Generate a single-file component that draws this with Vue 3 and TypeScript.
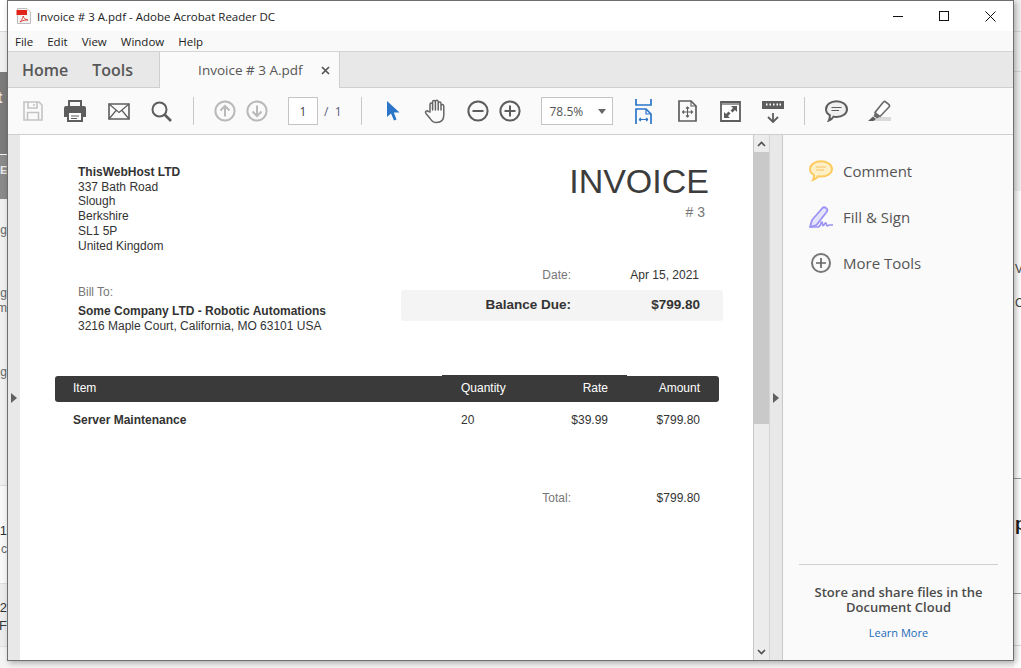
<template>
  <div class="desktop">
    <!-- page behind the window, only the edges show -->
    <div class="bg-left">
      <div class="bl-top"></div>
      <div class="bl-dark"><span class="bl-t">t</span><span class="bl-e">E</span></div>
      <div class="bl-mid">
        <span class="frag" style="top: 24px">ng</span>
        <span class="frag" style="top: 87px">ng</span>
        <span class="frag" style="top: 102px">m</span>
        <span class="frag" style="top: 166px">ng</span>
      </div>
      <div class="bl-low">
        <span class="frag dark" style="top: 38px">1</span>
        <span class="frag" style="top: 56px">c</span>
      </div>
      <div class="bl-bottom">
        <span class="frag dark" style="top: 17px">2</span>
        <span class="frag dark" style="top: 35px">)F</span>
      </div>
    </div>
    <div class="bg-right">
      <span class="frag-r" style="top: 262px">V</span>
      <span class="frag-r" style="top: 296px">C</span>
      <span class="frag-r big" style="top: 517px">p</span>
      <i class="bg-line light" style="top: 31px"></i>
      <i class="bg-line light" style="top: 71px"></i>
      <i class="bg-line" style="top: 478px"></i>
      <i class="bg-line" style="top: 593px"></i>
      <i class="bg-line light" style="top: 645px"></i>
    </div>

    <div class="window">
      <div class="titlebar">
        <svg class="pdf-icon" width="16" height="16" viewBox="0 0 16 16">
          <path d="M1.5 .5H11L14.5 4V15.5H1.5Z" fill="#f4f4f4" stroke="#bdbdbd" />
          <path d="M.5 2H11V7H.5Z" fill="#e2231a" />
          <path d="M4 14C6 12 7 9.5 7.2 8C7.6 10 9 11.5 12 12C9.5 11.8 6.5 12.4 4 14Z" fill="none" stroke="#d8372f" stroke-width=".9" />
        </svg>
        <span class="title-text">Invoice # 3 A.pdf - Adobe Acrobat Reader DC</span>
        <div class="win-btns">
          <span class="win-btn"><i class="min"></i></span>
          <span class="win-btn"><i class="max"></i></span>
          <span class="win-btn">
            <svg width="11" height="11" viewBox="0 0 11 11"><path d="M.5 .5L10.5 10.5M10.5 .5L.5 10.5" stroke="#111" fill="none" /></svg>
          </span>
        </div>
      </div>

      <div class="menubar">
        <span v-for="m in menus" :key="m">{{ m }}</span>
      </div>

      <div class="tabbar">
        <span class="nav-tab">Home</span>
        <span class="nav-tab">Tools</span>
        <div class="doc-tab">
          <span>Invoice # 3 A.pdf</span>
          <svg width="9" height="9" viewBox="0 0 9 9"><path d="M1 1L8 8M8 1L1 8" stroke="#555" stroke-width="1.7" /></svg>
        </div>
      </div>

      <div class="toolbar">
        <svg class="tool t-save" width="22" height="22" viewBox="0 0 22 22" fill="none" stroke="#c4c4c4" stroke-width="1.6">
          <path d="M2 2H17L20 5V20H2Z" />
          <path d="M6 2V8H15V2M12 4V6" />
          <path d="M5.5 20V12.5H16.5V20" />
        </svg>
        <svg class="tool t-print" width="24" height="22" viewBox="0 0 24 22">
          <path d="M6 1H18V7H6Z" fill="none" stroke="#5d5d5d" stroke-width="2" />
          <path d="M3 6H21Q23 6 23 8V17H19V13H5V17H1V8Q1 6 3 6Z" fill="#5d5d5d" />
          <path d="M5 12H19V21H5Z" fill="#fff" stroke="#5d5d5d" stroke-width="2" />
          <path d="M8 16H16M8 18.5H14" stroke="#5d5d5d" />
        </svg>
        <svg class="tool t-mail" width="22" height="17" viewBox="0 0 22 17" fill="none" stroke="#5d5d5d" stroke-width="1.6">
          <path d="M1 1H21V16H1Z" />
          <path d="M1 1L11 9.5L21 1M1 16L8 7.5M21 16L14 7.5" stroke-width="1.2" />
        </svg>
        <svg class="tool t-search" width="21" height="21" viewBox="0 0 21 21" fill="none" stroke="#5d5d5d">
          <circle cx="8.5" cy="8.5" r="7" stroke-width="2" />
          <path d="M13.5 13.5L20 20" stroke-width="2.6" />
        </svg>
        <i class="sep s1"></i>
        <svg class="tool t-up" width="22" height="22" viewBox="0 0 22 22" fill="none" stroke="#b9b9b9" stroke-width="2">
          <circle cx="11" cy="11" r="9.6" />
          <path d="M11 16.5V6M6.5 10.5L11 6L15.5 10.5" />
        </svg>
        <svg class="tool t-down" width="22" height="22" viewBox="0 0 22 22" fill="none" stroke="#b9b9b9" stroke-width="2">
          <circle cx="11" cy="11" r="9.6" />
          <path d="M11 5.5V16M6.5 11.5L11 16L15.5 11.5" />
        </svg>
        <span class="page-box">1</span>
        <span class="page-total">/&nbsp;&nbsp;1</span>
        <i class="sep s2"></i>
        <svg class="tool t-cursor" width="14" height="22" viewBox="0 0 14 22">
          <path d="M1 1V17L5 13.5L8 20.5L10.5 19.5L7.8 12.5H13.5Z" fill="#2a75c9" />
        </svg>
        <svg class="tool t-hand" width="24" height="25" viewBox="0 0 24 25" fill="none" stroke="#666" stroke-width="1.5" stroke-linejoin="round">
          <path d="M6 13V5.5Q6 4 7.3 4T8.6 5.5V11V3Q8.6 1.5 10 1.5T11.4 3V11V2.8Q11.4 1.3 12.8 1.3T14.2 2.8V11V4.5Q14.2 3 15.6 3T17 4.5V11V7Q17 5.6 18.3 5.6T19.8 7V16Q19.8 23.5 12.5 23.5Q8.5 23.5 6.5 20L2 14.5Q1 13 2.2 12.2T4.5 12.6Z" />
        </svg>
        <svg class="tool t-minus" width="22" height="22" viewBox="0 0 22 22" fill="none" stroke="#5d5d5d" stroke-width="2">
          <circle cx="11" cy="11" r="9.6" /><path d="M5.5 11H16.5" />
        </svg>
        <svg class="tool t-plus" width="22" height="22" viewBox="0 0 22 22" fill="none" stroke="#5d5d5d" stroke-width="2">
          <circle cx="11" cy="11" r="9.6" /><path d="M5.5 11H16.5M11 5.5V16.5" />
        </svg>
        <div class="zoom-box"><span>78.5%</span><i class="caret"></i></div>
        <svg class="tool t-fit" width="17" height="25" viewBox="0 0 17 25" fill="none" stroke="#2a75c9" stroke-width="1.7">
          <path d="M1 0V6H16V0" />
          <path d="M1 25V10H11L16 15V25" />
          <path d="M11 10V15H16" stroke-width="1.2" />
          <path d="M4 20.5H13M4 20.5L6 18.8M4 20.5L6 22.2M13 20.5L11 18.8M13 20.5L11 22.2" stroke-width="1.1" />
        </svg>
        <svg class="tool t-page" width="19" height="22" viewBox="0 0 19 22" fill="none" stroke="#5d5d5d" stroke-width="1.7">
          <path d="M1 1H13L18 6V21H1Z" />
          <path d="M13 1V6H18" stroke-width="1.1" />
          <path d="M9.5 7V17M4.5 12H14.5M8 8.5L9.5 7L11 8.5M8 15.5L9.5 17L11 15.5M6 10.5L4.5 12L6 13.5M13 10.5L14.5 12L13 13.5" stroke-width="1.1" />
        </svg>
        <svg class="tool t-full" width="21" height="21" viewBox="0 0 21 21">
          <path d="M1 1H20V20H1Z" fill="#fff" stroke="#5d5d5d" stroke-width="1.8" />
          <path d="M2 2H19V4H2Z" fill="#9a9a9a" />
          <path d="M11 5H17V11L15 9L12.5 11.5L10.5 9.5L13 7Z M10 17H4V11L6 13L8.5 10.5L10.5 12.5L8 15Z" fill="#5d5d5d" />
        </svg>
        <svg class="tool t-ruler" width="22" height="23" viewBox="0 0 22 23">
          <path d="M0 1H22V9H0Z" fill="#5d5d5d" />
          <path d="M4 3.5H5.5V5.5H4ZM7.5 3.5H9V5.5H7.5ZM11 3.5H12.5V5.5H11ZM14.5 3.5H16V5.5H14.5ZM17.5 3.5H19V5.5H17.5Z" fill="#fff" />
          <path d="M11 13V22M6 17L11 22L16 17" fill="none" stroke="#5d5d5d" stroke-width="1.8" />
        </svg>
        <i class="sep s3"></i>
        <svg class="tool t-comment" width="23" height="22" viewBox="0 0 23 22" fill="#f0f0f0" stroke="#5d5d5d" stroke-width="2">
          <path d="M11.5 1.2C17.5 1.2 22 4.8 22 9.2C22 13.6 17.5 17 11.5 17Q9.8 17 8.5 16.6Q7 19.5 3.8 20.6Q5 18.3 4.8 15.2Q1 13 1 9.2C1 4.8 5.5 1.2 11.5 1.2Z" />
          <path d="M6.5 7.5H16.5M6.5 10.5H14" stroke-width="1.2" />
        </svg>
        <svg class="tool t-marker" width="23" height="22" viewBox="0 0 23 22">
          <path d="M6 21H23V17H9Z" fill="#d9d9d9" />
          <path d="M17 1.5L21 4.5Q22 6 21 7L12 16.5L7 12.5L15 2.5Q16 1 17 1.5Z" fill="#fff" stroke="#6a6a6a" stroke-width="1.6" />
          <path d="M7 12.5L12 16.5L9 18.5L5.5 16Z" fill="#6a6a6a" />
          <path d="M5 16.5L8 19L5.5 21H0Z" fill="#5d5d5d" />
        </svg>
      </div>

      <div class="workspace">
        <div class="gutter-left"><i class="tri-right"></i></div>
        <div class="page">
          <div class="top-row">
            <div class="from">
              <b>ThisWebHost LTD</b>
              <span v-for="line in fromLines" :key="line">{{ line }}</span>
            </div>
            <div class="heading">
              <h1>INVOICE</h1>
              <div class="number"># 3</div>
            </div>
          </div>
          <div class="mid-row">
            <div class="bill">
              <div class="bill-label">Bill To:</div>
              <b>Some Company LTD - Robotic Automations</b>
              <span>3216 Maple Court, California, MO 63101 USA</span>
            </div>
            <div class="summary">
              <div class="date-row"><span class="muted">Date:</span><span class="val">Apr 15, 2021</span></div>
              <div class="due-row"><span>Balance Due:</span><span class="val">$799.80</span></div>
            </div>
          </div>
          <div class="items">
            <div class="thead">
              <span class="c-item">Item</span>
              <div class="thead-mid">
                <span class="c-qty">Quantity</span>
                <span class="c-rate">Rate</span>
              </div>
              <span class="c-amt">Amount</span>
            </div>
            <div class="irow" v-for="row in rows" :key="row.item">
              <b class="c-item">{{ row.item }}</b>
              <span class="c-qty">{{ row.qty }}</span>
              <span class="c-rate">{{ row.rate }}</span>
              <span class="c-amt">{{ row.amount }}</span>
            </div>
          </div>
          <div class="total"><span class="muted">Total:</span><span class="total-val">$799.80</span></div>
        </div>
        <div class="scrollbar">
          <svg width="9" height="6" viewBox="0 0 9 6"><path d="M1 5L4.5 1.5L8 5" fill="none" stroke="#505050" stroke-width="1.6" /></svg>
          <div class="thumb"></div>
          <div class="track"></div>
          <svg width="9" height="6" viewBox="0 0 9 6"><path d="M1 1L4.5 4.5L8 1" fill="none" stroke="#505050" stroke-width="1.6" /></svg>
        </div>
        <div class="gutter-right"><i class="tri-right"></i></div>
        <aside class="panel">
          <div class="panel-tools">
            <div class="ptool">
              <svg width="24" height="22" viewBox="0 0 24 22" fill="none">
                <path d="M12 1.2C18 1.2 23 4.5 23 9C23 13.5 18 16.5 12 16.5Q10.4 16.5 9 16.2Q7.4 19 4 20Q5.3 17.5 5 15Q1 13 1 9C1 4.5 6 1.2 12 1.2Z" fill="#ffefc4" stroke="#fdca5e" stroke-width="1.9" />
                <path d="M7 7H17M7 10H15" stroke="#f6c465" stroke-width="1" />
              </svg>
              <span>Comment</span>
            </div>
            <div class="ptool">
              <svg width="24" height="22" viewBox="0 0 24 22" fill="none" stroke="#9a92f4" stroke-width="1.8" stroke-linejoin="round">
                <path d="M1 21L3 14L13.5 2Q15 .6 17 2T18 5.5L7.5 19Z" fill="#e6e4fb" />
                <path d="M1 21H9Q11 21 12 17Q13.5 14.5 13.5 18T16 17.5Q17 16 17.5 18.5T20 19H24" stroke-width="1.6" />
              </svg>
              <span>Fill &amp; Sign</span>
            </div>
            <div class="ptool">
              <svg width="24" height="22" viewBox="0 0 24 22" fill="none" stroke="#777" stroke-width="2">
                <circle cx="12" cy="11" r="9" />
                <path d="M7 11H17M12 6V16" stroke="#666" stroke-width="1.7" />
              </svg>
              <span>More Tools</span>
            </div>
          </div>
          <div class="promo">
            <p>Store and share files in the Document Cloud</p>
            <a>Learn More</a>
          </div>
        </aside>
      </div>
    </div>
  </div>
</template>

<script setup lang="ts">
interface Row {
  item: string;
  qty: string;
  rate: string;
  amount: string;
}

const menus: string[] = ["File", "Edit", "View", "Window", "Help"];
const fromLines: string[] = ["337 Bath Road", "Slough", "Berkshire", "SL1 5P", "United Kingdom"];
const rows: Row[] = [{ item: "Server Maintenance", qty: "20", rate: "$39.99", amount: "$799.80" }];
</script>

<style>
html,
body {
  margin: 0;
  background: #fff;
}
</style>

<style scoped>
.desktop {
  position: relative;
  width: 1021px;
  height: 668px;
  overflow: hidden;
  background: #f4f4f4;
  font-family: "Open Sans", "Noto Sans", sans-serif;
}

/* background page */
.bg-left {
  position: absolute;
  left: 0;
  top: 0;
  width: 7px;
  height: 668px;
  display: flex;
  flex-direction: column;
  overflow: hidden;
  font-family: "Liberation Sans", sans-serif;
  font-size: 12px;
  color: #666;
}
.bl-top {
  height: 72px;
  background: linear-gradient(#fff 31px, #d8d8d8 31px, #d8d8d8 32px, #f0f0f0 32px);
}
.bl-dark {
  position: relative;
  height: 127px;
  background: linear-gradient(#7b7b7b 82px, #f4f4f4 82px, #f4f4f4 83px, #8a8a8a 83px);
  color: #e8e8e8;
  font-weight: 700;
}
.bl-t {
  position: absolute;
  left: -3px;
  top: 17px;
  font-size: 16px;
}
.bl-e {
  position: absolute;
  left: 0;
  top: 92px;
  font-size: 11px;
}
.bl-mid {
  position: relative;
  height: 286px;
  background: #f0f0f0;
  border-bottom: 1px solid #ddd;
}
.bl-low {
  position: relative;
  height: 97px;
  background: #f8f8f8;
}
.bl-bottom {
  position: relative;
  height: 62px;
  background: #ececec;
  border-top: 1px solid #ddd;
  border-bottom: 1px solid #ddd;
}
.frag {
  position: absolute;
  right: 0;
  line-height: 14px;
}
.frag.dark {
  color: #333;
  font-size: 13px;
}
.bg-right {
  position: absolute;
  right: 0;
  top: 0;
  width: 7px;
  height: 668px;
  background: linear-gradient(#f0f0f0 191px, #fff 191px);
  font-family: "Liberation Sans", sans-serif;
  font-size: 12px;
  color: #444;
  overflow: hidden;
}
.frag-r {
  position: absolute;
  left: 1px;
  line-height: 14px;
}
.frag-r.big {
  font-size: 18px;
  color: #222;
  font-weight: 700;
}
.bg-line {
  position: absolute;
  left: 0;
  width: 7px;
  height: 1px;
  background: #9a9a9a;
}
.bg-line.light {
  background: #d8d8d8;
}

/* window */
.window {
  position: absolute;
  left: 7px;
  top: 0;
  width: 1005px;
  height: 659px;
  display: flex;
  flex-direction: column;
  border: 1px solid #6e6e6e;
  background: #fff;
  box-shadow: 2px 2px 6px rgba(0, 0, 0, 0.3);
}
.titlebar {
  height: 30px;
  flex: none;
  display: flex;
  align-items: center;
  padding-left: 8px;
  background: #fff;
  font-size: 11.5px;
  color: #222;
}
.pdf-icon {
  margin-right: 5px;
}
.win-btns {
  margin-left: auto;
  display: flex;
}
.win-btn {
  width: 46px;
  height: 30px;
  display: flex;
  align-items: center;
  justify-content: center;
}
.min {
  width: 10px;
  height: 1px;
  background: #111;
}
.max {
  box-sizing: border-box;
  width: 10px;
  height: 10px;
  border: 1px solid #111;
}
.menubar {
  height: 20px;
  flex: none;
  display: flex;
  align-items: center;
  gap: 14px;
  padding-left: 7px;
  background: #f9f9f9;
  font-size: 11.5px;
  color: #222;
  border-bottom: 1px solid #d4d4d4;
}
.tabbar {
  height: 35px;
  flex: none;
  display: flex;
  align-items: stretch;
  background: #e8e8e8;
  border-bottom: 1px solid #cfcfcf;
  padding-left: 14px;
}
.nav-tab {
  align-self: center;
  margin-right: 24px;
  font-size: 16px;
  font-weight: 600;
  color: #575757;
}
.doc-tab {
  margin-left: 2px;
  margin-bottom: -1px;
  width: 181px;
  box-sizing: border-box;
  display: flex;
  align-items: center;
  justify-content: space-between;
  padding: 0 9px 0 38px;
  background: #fafafa;
  border-left: 1px solid #cfcfcf;
  border-right: 1px solid #cfcfcf;
  font-size: 13.5px;
  color: #555;
}
.toolbar {
  height: 46px;
  flex: none;
  display: flex;
  align-items: center;
  background: #fafafa;
  border-bottom: 1px solid #cfcfcf;
}
.tool {
  flex: none;
}
.t-save { margin-left: 14px; }
.t-print { margin-left: 19px; }
.t-mail { margin-left: 21px; }
.t-search { margin-left: 21px; }
.sep {
  flex: none;
  width: 1px;
  height: 28px;
  background: #c8c8c8;
}
.s1 { margin-left: 21px; }
.t-up { margin-left: 20px; }
.t-down { margin-left: 10px; }
.page-box {
  margin-left: 20px;
  width: 28px;
  height: 26px;
  display: flex;
  align-items: center;
  justify-content: center;
  background: #fff;
  border: 1px solid #c4c4c4;
  font-size: 12px;
  color: #444;
}
.page-total {
  margin-left: 6px;
  font-size: 12px;
  color: #5a5a7a;
}
.s2 { margin-left: 19px; }
.t-cursor { margin-left: 24px; }
.t-hand { margin-left: 24px; }
.t-minus { margin-left: 19px; }
.t-plus { margin-left: 10px; }
.zoom-box {
  margin-left: 20px;
  width: 70px;
  height: 26px;
  display: flex;
  align-items: center;
  justify-content: space-between;
  background: #fff;
  border: 1px solid #c4c4c4;
  font-size: 12px;
  color: #555;
}
.zoom-box span {
  margin-left: 8px;
}
.caret {
  margin-right: 6px;
  border: 4px solid transparent;
  border-top: 5px solid #666;
  border-bottom: 0;
}
.t-fit { margin-left: 22px; }
.t-page { margin-left: 26px; }
.t-full { margin-left: 23px; }
.t-ruler { margin-left: 21px; }
.s3 { margin-left: 20px; }
.t-comment { margin-left: 20px; }
.t-marker { margin-left: 20px; }

.workspace {
  flex: 1;
  min-height: 0;
  display: flex;
}
.gutter-left {
  width: 12px;
  flex: none;
  display: flex;
  align-items: center;
  justify-content: center;
  background: #e8e8e8;
}
.tri-right {
  border: 5px solid transparent;
  border-left: 6px solid #5f5f5f;
  border-right: 0;
}
.page {
  width: 734px;
  flex: none;
  box-sizing: border-box;
  padding: 30px 34px 0 35px;
  background: #fff;
  font-family: "Liberation Sans", sans-serif;
  font-size: 12px;
  color: #333;
  border-right: 1px solid #c8c8c8;
}
.top-row {
  display: flex;
  justify-content: space-between;
  padding-left: 23px;
  padding-right: 10px;
}
.from {
  display: flex;
  flex-direction: column;
  line-height: 14.7px;
  color: #333;
}
.heading {
  text-align: right;
}
.heading h1 {
  margin: -4px 0 0;
  font-size: 34px;
  font-weight: 400;
  line-height: 40px;
  color: #3c3c3c;
}
.number {
  margin-top: 3px;
  padding-right: 4px;
  font-size: 14px;
  line-height: 16px;
  color: #777;
}
.mid-row {
  display: flex;
  justify-content: space-between;
  margin-top: 15px;
  padding-left: 23px;
}
.bill {
  display: flex;
  flex-direction: column;
  margin-top: 17px;
  line-height: 15px;
}
.bill-label {
  color: #777;
  margin-bottom: 4px;
}
.summary {
  width: 322px;
  flex: none;
  margin-right: -4px;
}
.muted {
  color: #777;
}
.date-row,
.due-row {
  display: grid;
  grid-template-columns: 170px 128px;
  text-align: right;
}
.date-row {
  line-height: 15px;
  margin-bottom: 7px;
}
.val {
  color: #333;
}
.due-row {
  grid-template-columns: 170px 129px;
  height: 31px;
  box-sizing: border-box;
  padding-bottom: 3px;
  align-items: center;
  border-radius: 3px;
  background: #f4f4f4;
  font-size: 13.5px;
  font-weight: 700;
}
.items {
  margin-top: 42px;
}
.thead,
.irow {
  display: grid;
  grid-template-columns: 387px 185px 92px;
  align-items: center;
}
.thead {
  position: relative;
  height: 26px;
  border-radius: 3px;
  background: #3a3a3a;
  color: #fff;
}
.thead-mid {
  display: grid;
  grid-template-columns: 1fr 1fr;
  height: 27px;
  margin-top: -1px;
  background: #3a3a3a;
  align-items: center;
}
.thead span {
  margin-top: -2px;
}
.c-item {
  padding-left: 18px;
}
.c-qty {
  padding-left: 19px;
}
.c-rate {
  text-align: right;
  padding-right: 19px;
}
.c-amt {
  text-align: right;
  padding-right: 19px;
}
.irow {
  grid-template-columns: 387px 92.5px 92.5px 92px;
  height: 35px;
  color: #333;
}
.total {
  display: grid;
  grid-template-columns: 516px 148px;
  margin-top: 54px;
  line-height: 15px;
  text-align: right;
}
.total-val {
  padding-right: 19px;
}
.scrollbar {
  width: 15px;
  flex: none;
  display: flex;
  flex-direction: column;
  align-items: center;
  background: #ececec;
  border-right: 1px solid #d4d4d4;
  padding: 6px 0 5px;
}
.thumb {
  width: 15px;
  height: 272px;
  flex: none;
  margin-top: 5px;
  background: #c9c9c9;
}
.track {
  flex: 1;
}
.gutter-right {
  width: 12px;
  flex: none;
  display: flex;
  align-items: center;
  justify-content: center;
  background: #e8e8e8;
  border-right: 1px solid #c8c8c8;
}
.panel {
  flex: 1;
  min-width: 0;
  display: flex;
  flex-direction: column;
  background: #fafafa;
}
.panel-tools {
  padding: 25px 0 0 26px;
  display: flex;
  flex-direction: column;
  gap: 24px;
}
.ptool {
  height: 22px;
  display: flex;
  align-items: center;
  gap: 10px;
  font-size: 15px;
  color: #555;
}
.promo {
  margin: auto 15px 0 16px;
  padding: 20px 0 19px;
  border-top: 1px solid #cfcfcf;
  text-align: center;
}
.promo p {
  margin: 0 0 10px;
  font-size: 13px;
  font-weight: 600;
  line-height: 15px;
  color: #4b4b4b;
}
.promo a {
  display: block;
  font-size: 11px;
  line-height: 16px;
  color: #1a6bb8;
}
</style>
